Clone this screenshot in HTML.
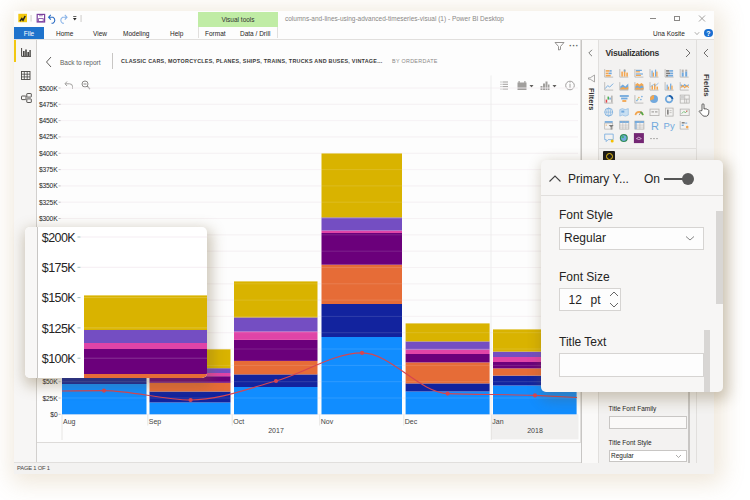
<!DOCTYPE html>
<html><head><meta charset="utf-8">
<style>
*{margin:0;padding:0;box-sizing:border-box}
html,body{width:750px;height:500px;overflow:hidden;background:#fff;font-family:"Liberation Sans",sans-serif;color:#252423}
.a{position:absolute}
#win{left:14px;top:11px;width:700px;height:463px;background:#f9f9f9;box-shadow:3px 4px 22px 5px rgba(175,135,70,0.2)}
.t{position:absolute;white-space:nowrap;line-height:1}
</style></head><body>
<div id="win" class="a"></div>
<div class="a" style="left:14px;top:11px;width:700px;height:28px;background:#fdfdfd"></div>

<!-- title bar -->
<div class="a" style="left:198px;top:12px;width:80px;height:15px;background:#c0eca5"></div>
<div class="t" style="left:198px;top:17px;width:80px;text-align:center;font-size:6.5px;color:#333">Visual tools</div>
<div class="t" style="left:285px;top:16px;font-size:6.5px;color:#8a8886">columns-and-lines-using-advanced-timeseries-visual (1) - Power BI Desktop</div>

<!-- ribbon row -->
<div class="a" style="left:14px;top:27px;width:30px;height:12px;background:#1f73cc"></div>
<div class="t" style="left:14px;top:30.8px;width:30px;text-align:center;font-size:6.5px;color:#fff">File</div>
<div class="t" style="left:56px;top:30.8px;font-size:6.5px">Home</div>
<div class="t" style="left:93px;top:30.8px;font-size:6.5px">View</div>
<div class="t" style="left:123px;top:30.8px;font-size:6.5px">Modeling</div>
<div class="t" style="left:170px;top:30.8px;font-size:6.5px">Help</div>
<div class="t" style="left:205px;top:30.8px;font-size:6.5px">Format</div>
<div class="t" style="left:240px;top:30.8px;font-size:6.5px">Data / Drill</div>
<div class="t" style="left:653px;top:30.8px;font-size:6.5px;color:#252423">Una Kosite</div>
<div class="a" style="left:14px;top:39px;width:700px;height:1px;background:#e1dfdd"></div>

<!-- left nav -->
<div class="a" style="left:14px;top:40px;width:23px;height:423px;background:#f7f6f5;border-right:1px solid #d2d0ce"></div>
<div class="a" style="left:14px;top:40px;width:2px;height:22px;background:#f2c811"></div>

<!-- status bar -->
<div class="a" style="left:14px;top:462px;width:700px;height:12px;background:#f3f2f1;border-top:1px solid #e1dfdd"></div>
<div class="t" style="left:17px;top:465.5px;font-size:5.8px;color:#484644;letter-spacing:-0.2px">PAGE 1 OF 1</div>

<!-- visual box -->
<div class="a" style="left:37px;top:40px;width:544px;height:403px;border-right:1px solid #e1dfdd;border-bottom:1px solid #dddbd9;background:#fdfdfd"></div>


<!-- visual header -->
<svg class="a" style="left:45px;top:56px" width="8" height="12" viewBox="0 0 8 12"><path d="M6 1 L1.5 6 L6 11" fill="none" stroke="#605e5c" stroke-width="1"/></svg>
<div class="t" style="left:60px;top:60px;font-size:6.5px;color:#605e5c">Back to report</div>
<div class="a" style="left:112px;top:53px;width:1px;height:16px;background:#c8c6c4"></div>
<div class="t" style="left:121px;top:59px;font-size:5.4px;font-weight:bold;color:#3b3a39;letter-spacing:0.25px">CLASSIC CARS, MOTORCYCLES, PLANES, SHIPS, TRAINS, TRUCKS AND BUSES, VINTAGE...</div>
<div class="t" style="left:392px;top:59px;font-size:5.4px;color:#8a8886;letter-spacing:0.3px">BY ORDERDATE</div>
<!-- undo & zoom -->
<svg class="a" style="left:64px;top:80px" width="10" height="10" viewBox="0 0 10 10"><path d="M3 1.5 L1 3.8 L3 6 M1.2 3.8 H5.5 Q8.5 3.8 8.5 6.5 V9" fill="none" stroke="#a19f9d" stroke-width="1"/></svg>
<svg class="a" style="left:81px;top:80px" width="10" height="10" viewBox="0 0 10 10"><circle cx="4" cy="4" r="3" fill="none" stroke="#8a8886" stroke-width="1"/><path d="M2.5 4 H5.5 M6.2 6.2 L9 9" stroke="#8a8886" stroke-width="1.1"/></svg>
<!-- top right visual icons -->
<svg class="a" style="left:554px;top:41px" width="11" height="10" viewBox="0 0 11 10"><path d="M1 1.5 H10 L6.5 5.5 V8.5 L4.5 9 V5.5 Z" fill="none" stroke="#8a8886" stroke-width="0.9"/></svg>
<div class="t" style="left:569px;top:41.5px;font-size:9px;font-weight:bold;color:#605e5c;letter-spacing:0.3px">&middot;&middot;&middot;</div>
<svg class="a" style="left:500px;top:80px" width="80" height="11" viewBox="0 0 80 11">
 <g stroke="#8a8886" stroke-width="0.8"><line x1="2.5" y1="2" x2="8" y2="2"/><line x1="2.5" y1="4.3" x2="8" y2="4.3"/><line x1="2.5" y1="6.6" x2="8" y2="6.6"/><line x1="2.5" y1="9" x2="8" y2="9"/><line x1="0.5" y1="2" x2="1.5" y2="2"/><line x1="0.5" y1="4.3" x2="1.5" y2="4.3"/><line x1="0.5" y1="6.6" x2="1.5" y2="6.6"/><line x1="0.5" y1="9" x2="1.5" y2="9"/></g>
 <rect x="17.5" y="2.5" width="9" height="7.5" fill="#a19f9d"/><rect x="18.5" y="1" width="1.2" height="2" fill="#a19f9d"/><rect x="24.3" y="1" width="1.2" height="2" fill="#a19f9d"/>
 <path d="M29.5 5 L33.5 5 L31.5 7.5Z" fill="#605e5c"/>
 <rect x="40.5" y="6" width="2" height="4" fill="#a19f9d"/><rect x="43" y="3.5" width="2" height="6.5" fill="#a19f9d"/><rect x="45.5" y="1.5" width="2" height="8.5" fill="#a19f9d"/><rect x="48" y="4.5" width="1.5" height="5.5" fill="#a19f9d"/>
 <path d="M52.5 5 L56.5 5 L54.5 7.5Z" fill="#605e5c"/>
 <circle cx="70" cy="5.5" r="4.3" fill="none" stroke="#8a8886" stroke-width="0.8"/><line x1="70" y1="4" x2="70" y2="8" stroke="#8a8886" stroke-width="0.8"/><circle cx="70" cy="2.8" r="0.5" fill="#8a8886"/>
</svg>
<!-- left nav icons -->
<svg class="a" style="left:20.5px;top:47.5px" width="10" height="9" viewBox="0 0 10 9"><path d="M0.6 0 V8.4 H10" fill="none" stroke="#484644" stroke-width="1"/><rect x="2" y="3" width="1.6" height="5" fill="#484644"/><rect x="4.2" y="1.5" width="1.6" height="6.5" fill="#484644"/><rect x="6.4" y="4" width="1.6" height="4" fill="#484644"/><rect x="8.4" y="2" width="1.4" height="6" fill="#484644"/></svg>
<svg class="a" style="left:21px;top:70.5px" width="9.5" height="9" viewBox="0 0 9.5 9"><rect x="0.5" y="0.5" width="8.5" height="8" fill="none" stroke="#484644" stroke-width="0.9"/><path d="M0.5 3.2 H9 M0.5 5.9 H9 M3.3 0.5 V8.5 M6.2 0.5 V8.5" stroke="#484644" stroke-width="0.8"/></svg>
<svg class="a" style="left:20.5px;top:92.5px" width="11" height="10" viewBox="0 0 11 10"><rect x="0.5" y="3" width="4.5" height="3.6" rx="0.5" fill="none" stroke="#484644" stroke-width="0.9"/><rect x="5.8" y="0.5" width="4.5" height="3.6" rx="0.5" fill="none" stroke="#484644" stroke-width="0.9"/><rect x="5.8" y="5.9" width="4.5" height="3.6" rx="0.5" fill="none" stroke="#484644" stroke-width="0.9"/></svg>
<svg class="a" style="left:0;top:0" width="750" height="500" viewBox="0 0 750 500"><g font-family="Liberation Sans" font-size="7" fill="#444"><rect x="491" y="414.3" width="87.5" height="25" fill="#f0efee"/><line x1="62" y1="414.3" x2="62" y2="440" stroke="#e1dfdd" stroke-width="0.8"/><text x="63" y="423.5">Aug</text><line x1="147.8" y1="414.3" x2="147.8" y2="425.5" stroke="#e1dfdd" stroke-width="0.8"/><text x="148.8" y="423.5">Sep</text><line x1="232.2" y1="414.3" x2="232.2" y2="425.5" stroke="#e1dfdd" stroke-width="0.8"/><text x="233.2" y="423.5">Oct</text><line x1="319.7" y1="414.3" x2="319.7" y2="425.5" stroke="#e1dfdd" stroke-width="0.8"/><text x="320.7" y="423.5">Nov</text><line x1="403.8" y1="414.3" x2="403.8" y2="425.5" stroke="#e1dfdd" stroke-width="0.8"/><text x="404.8" y="423.5">Dec</text><line x1="491.3" y1="414.3" x2="491.3" y2="440" stroke="#e1dfdd" stroke-width="0.8"/><text x="492.3" y="423.5">Jan</text><text x="276" y="432.5" text-anchor="middle">2017</text><text x="535" y="432.5" text-anchor="middle">2018</text></g></svg><svg class="a" style="left:0;top:0" width="750" height="500" viewBox="0 0 750 500"><g><line x1="60" y1="88.0" x2="578" y2="88.0" stroke="#f2ecf0" stroke-width="0.8"/><line x1="60" y1="104.3" x2="578" y2="104.3" stroke="#f2ecf0" stroke-width="0.8"/><line x1="60" y1="120.6" x2="578" y2="120.6" stroke="#f2ecf0" stroke-width="0.8"/><line x1="60" y1="136.9" x2="578" y2="136.9" stroke="#f2ecf0" stroke-width="0.8"/><line x1="60" y1="153.3" x2="578" y2="153.3" stroke="#f2ecf0" stroke-width="0.8"/><line x1="60" y1="169.6" x2="578" y2="169.6" stroke="#f2ecf0" stroke-width="0.8"/><line x1="60" y1="185.9" x2="578" y2="185.9" stroke="#f2ecf0" stroke-width="0.8"/><line x1="60" y1="202.2" x2="578" y2="202.2" stroke="#f2ecf0" stroke-width="0.8"/><line x1="60" y1="218.5" x2="578" y2="218.5" stroke="#f2ecf0" stroke-width="0.8"/><line x1="60" y1="234.8" x2="578" y2="234.8" stroke="#f2ecf0" stroke-width="0.8"/><line x1="60" y1="251.2" x2="578" y2="251.2" stroke="#f2ecf0" stroke-width="0.8"/><line x1="60" y1="267.5" x2="578" y2="267.5" stroke="#f2ecf0" stroke-width="0.8"/><line x1="60" y1="283.8" x2="578" y2="283.8" stroke="#f2ecf0" stroke-width="0.8"/><line x1="60" y1="300.1" x2="578" y2="300.1" stroke="#f2ecf0" stroke-width="0.8"/><line x1="60" y1="316.4" x2="578" y2="316.4" stroke="#f2ecf0" stroke-width="0.8"/><line x1="60" y1="332.7" x2="578" y2="332.7" stroke="#f2ecf0" stroke-width="0.8"/><line x1="60" y1="349.0" x2="578" y2="349.0" stroke="#f2ecf0" stroke-width="0.8"/><line x1="60" y1="365.4" x2="578" y2="365.4" stroke="#f2ecf0" stroke-width="0.8"/><line x1="60" y1="381.7" x2="578" y2="381.7" stroke="#f2ecf0" stroke-width="0.8"/><line x1="60" y1="398.0" x2="578" y2="398.0" stroke="#f2ecf0" stroke-width="0.8"/><line x1="60" y1="414.3" x2="578" y2="414.3" stroke="#f2ecf0" stroke-width="0.8"/></g><line x1="491" y1="75.5" x2="491" y2="414" stroke="#e8e8e8" stroke-width="0.8"/><rect x="62" y="384" width="84.5" height="30.3" fill="#118DFF"/><rect x="62" y="372" width="84.5" height="12.0" fill="#12239E"/><rect x="62" y="358" width="84.5" height="14.0" fill="#E66C37"/><rect x="62" y="343.6" width="84.5" height="14.4" fill="#6B007B"/><rect x="62" y="340.7" width="84.5" height="2.9" fill="#E044A7"/><rect x="62" y="333.8" width="84.5" height="6.9" fill="#744EC2"/><rect x="62" y="315.1" width="84.5" height="18.7" fill="#D9B300"/><rect x="149.5" y="402.5" width="81.0" height="11.8" fill="#118DFF"/><rect x="149.5" y="391.5" width="81.0" height="11.0" fill="#12239E"/><rect x="149.5" y="382.8" width="81.0" height="8.7" fill="#E66C37"/><rect x="149.5" y="376.2" width="81.0" height="6.6" fill="#6B007B"/><rect x="149.5" y="373" width="81.0" height="3.2" fill="#E044A7"/><rect x="149.5" y="368.2" width="81.0" height="4.8" fill="#744EC2"/><rect x="149.5" y="349.3" width="81.0" height="18.9" fill="#D9B300"/><rect x="234" y="387" width="83.5" height="27.3" fill="#118DFF"/><rect x="234" y="374.4" width="83.5" height="12.6" fill="#12239E"/><rect x="234" y="360.9" width="83.5" height="13.5" fill="#E66C37"/><rect x="234" y="339.9" width="83.5" height="21.0" fill="#6B007B"/><rect x="234" y="331.5" width="83.5" height="8.4" fill="#E044A7"/><rect x="234" y="317.4" width="83.5" height="14.1" fill="#744EC2"/><rect x="234" y="281.4" width="83.5" height="36.0" fill="#D9B300"/><rect x="321.5" y="337" width="80.5" height="77.3" fill="#118DFF"/><rect x="321.5" y="304" width="80.5" height="33.0" fill="#12239E"/><rect x="321.5" y="264.7" width="80.5" height="39.3" fill="#E66C37"/><rect x="321.5" y="233" width="80.5" height="31.7" fill="#6B007B"/><rect x="321.5" y="230.5" width="80.5" height="2.5" fill="#E044A7"/><rect x="321.5" y="217.4" width="80.5" height="13.1" fill="#744EC2"/><rect x="321.5" y="153.4" width="80.5" height="64.0" fill="#D9B300"/><rect x="405.6" y="391.5" width="84.0" height="22.8" fill="#118DFF"/><rect x="405.6" y="383.4" width="84.0" height="8.1" fill="#12239E"/><rect x="405.6" y="362.4" width="84.0" height="21.0" fill="#E66C37"/><rect x="405.6" y="354" width="84.0" height="8.4" fill="#6B007B"/><rect x="405.6" y="349.5" width="84.0" height="4.5" fill="#E044A7"/><rect x="405.6" y="341.4" width="84.0" height="8.1" fill="#744EC2"/><rect x="405.6" y="323.4" width="84.0" height="18.0" fill="#D9B300"/><rect x="493" y="385.5" width="83.6" height="28.8" fill="#118DFF"/><rect x="493" y="375.6" width="83.6" height="9.9" fill="#12239E"/><rect x="493" y="368.4" width="83.6" height="7.2" fill="#E66C37"/><rect x="493" y="362" width="83.6" height="6.4" fill="#6B007B"/><rect x="493" y="357" width="83.6" height="5.0" fill="#E044A7"/><rect x="493" y="351.6" width="83.6" height="5.4" fill="#744EC2"/><rect x="493" y="329.4" width="83.6" height="22.2" fill="#D9B300"/><line x1="62" y1="88.0" x2="577" y2="88.0" stroke="#ffffff" stroke-opacity="0.18" stroke-width="0.7"/><line x1="62" y1="104.3" x2="577" y2="104.3" stroke="#ffffff" stroke-opacity="0.18" stroke-width="0.7"/><line x1="62" y1="120.6" x2="577" y2="120.6" stroke="#ffffff" stroke-opacity="0.18" stroke-width="0.7"/><line x1="62" y1="136.9" x2="577" y2="136.9" stroke="#ffffff" stroke-opacity="0.18" stroke-width="0.7"/><line x1="62" y1="153.3" x2="577" y2="153.3" stroke="#ffffff" stroke-opacity="0.18" stroke-width="0.7"/><line x1="62" y1="169.6" x2="577" y2="169.6" stroke="#ffffff" stroke-opacity="0.18" stroke-width="0.7"/><line x1="62" y1="185.9" x2="577" y2="185.9" stroke="#ffffff" stroke-opacity="0.18" stroke-width="0.7"/><line x1="62" y1="202.2" x2="577" y2="202.2" stroke="#ffffff" stroke-opacity="0.18" stroke-width="0.7"/><line x1="62" y1="218.5" x2="577" y2="218.5" stroke="#ffffff" stroke-opacity="0.18" stroke-width="0.7"/><line x1="62" y1="234.8" x2="577" y2="234.8" stroke="#ffffff" stroke-opacity="0.18" stroke-width="0.7"/><line x1="62" y1="251.2" x2="577" y2="251.2" stroke="#ffffff" stroke-opacity="0.18" stroke-width="0.7"/><line x1="62" y1="267.5" x2="577" y2="267.5" stroke="#ffffff" stroke-opacity="0.18" stroke-width="0.7"/><line x1="62" y1="283.8" x2="577" y2="283.8" stroke="#ffffff" stroke-opacity="0.18" stroke-width="0.7"/><line x1="62" y1="300.1" x2="577" y2="300.1" stroke="#ffffff" stroke-opacity="0.18" stroke-width="0.7"/><line x1="62" y1="316.4" x2="577" y2="316.4" stroke="#ffffff" stroke-opacity="0.18" stroke-width="0.7"/><line x1="62" y1="332.7" x2="577" y2="332.7" stroke="#ffffff" stroke-opacity="0.18" stroke-width="0.7"/><line x1="62" y1="349.0" x2="577" y2="349.0" stroke="#ffffff" stroke-opacity="0.18" stroke-width="0.7"/><line x1="62" y1="365.4" x2="577" y2="365.4" stroke="#ffffff" stroke-opacity="0.18" stroke-width="0.7"/><line x1="62" y1="381.7" x2="577" y2="381.7" stroke="#ffffff" stroke-opacity="0.18" stroke-width="0.7"/><line x1="62" y1="398.0" x2="577" y2="398.0" stroke="#ffffff" stroke-opacity="0.18" stroke-width="0.7"/><path d="M62,391 C76.0,390.8 90.0,390.6 104,390.6 C132.9,390.6 161.7,400.0 190.6,400 C219.1,400.0 247.5,388.8 276,381 C304.7,373.1 333.3,352.9 362,352.9 C390.5,352.9 419.1,392.4 447.6,393.6 C476.7,394.8 505.9,394.2 535,395.4 C549.0,396.0 563.0,396.7 577,397.5" fill="none" stroke="#D64550" stroke-width="1.1"/><circle cx="104" cy="390.6" r="2.1" fill="#D64550"/><circle cx="190.6" cy="400" r="2.1" fill="#D64550"/><circle cx="276" cy="381" r="2.1" fill="#D64550"/><circle cx="362" cy="352.9" r="2.1" fill="#D64550"/><circle cx="447.6" cy="393.6" r="2.1" fill="#D64550"/><circle cx="535" cy="395.4" r="2.1" fill="#D64550"/><g font-family="Liberation Sans" font-size="6.7" fill="#252423" letter-spacing="-0.15"><text x="57.5" y="90.5" text-anchor="end">$500K</text><line x1="58.5" y1="88.0" x2="60.5" y2="88.0" stroke="#999" stroke-width="0.6"/><text x="57.5" y="106.8" text-anchor="end">$475K</text><line x1="58.5" y1="104.3" x2="60.5" y2="104.3" stroke="#999" stroke-width="0.6"/><text x="57.5" y="123.1" text-anchor="end">$450K</text><line x1="58.5" y1="120.6" x2="60.5" y2="120.6" stroke="#999" stroke-width="0.6"/><text x="57.5" y="139.4" text-anchor="end">$425K</text><line x1="58.5" y1="136.9" x2="60.5" y2="136.9" stroke="#999" stroke-width="0.6"/><text x="57.5" y="155.8" text-anchor="end">$400K</text><line x1="58.5" y1="153.3" x2="60.5" y2="153.3" stroke="#999" stroke-width="0.6"/><text x="57.5" y="172.1" text-anchor="end">$375K</text><line x1="58.5" y1="169.6" x2="60.5" y2="169.6" stroke="#999" stroke-width="0.6"/><text x="57.5" y="188.4" text-anchor="end">$350K</text><line x1="58.5" y1="185.9" x2="60.5" y2="185.9" stroke="#999" stroke-width="0.6"/><text x="57.5" y="204.7" text-anchor="end">$325K</text><line x1="58.5" y1="202.2" x2="60.5" y2="202.2" stroke="#999" stroke-width="0.6"/><text x="57.5" y="221.0" text-anchor="end">$300K</text><line x1="58.5" y1="218.5" x2="60.5" y2="218.5" stroke="#999" stroke-width="0.6"/><text x="57.5" y="237.3" text-anchor="end">$275K</text><line x1="58.5" y1="234.8" x2="60.5" y2="234.8" stroke="#999" stroke-width="0.6"/><text x="57.5" y="253.7" text-anchor="end">$250K</text><line x1="58.5" y1="251.2" x2="60.5" y2="251.2" stroke="#999" stroke-width="0.6"/><text x="57.5" y="270.0" text-anchor="end">$225K</text><line x1="58.5" y1="267.5" x2="60.5" y2="267.5" stroke="#999" stroke-width="0.6"/><text x="57.5" y="286.3" text-anchor="end">$200K</text><line x1="58.5" y1="283.8" x2="60.5" y2="283.8" stroke="#999" stroke-width="0.6"/><text x="57.5" y="302.6" text-anchor="end">$175K</text><line x1="58.5" y1="300.1" x2="60.5" y2="300.1" stroke="#999" stroke-width="0.6"/><text x="57.5" y="318.9" text-anchor="end">$150K</text><line x1="58.5" y1="316.4" x2="60.5" y2="316.4" stroke="#999" stroke-width="0.6"/><text x="57.5" y="335.2" text-anchor="end">$125K</text><line x1="58.5" y1="332.7" x2="60.5" y2="332.7" stroke="#999" stroke-width="0.6"/><text x="57.5" y="351.5" text-anchor="end">$100K</text><line x1="58.5" y1="349.0" x2="60.5" y2="349.0" stroke="#999" stroke-width="0.6"/><text x="57.5" y="367.9" text-anchor="end">$75K</text><line x1="58.5" y1="365.4" x2="60.5" y2="365.4" stroke="#999" stroke-width="0.6"/><text x="57.5" y="384.2" text-anchor="end">$50K</text><line x1="58.5" y1="381.7" x2="60.5" y2="381.7" stroke="#999" stroke-width="0.6"/><text x="57.5" y="400.5" text-anchor="end">$25K</text><line x1="58.5" y1="398.0" x2="60.5" y2="398.0" stroke="#999" stroke-width="0.6"/><text x="57.5" y="416.8" text-anchor="end">$0</text><line x1="58.5" y1="414.3" x2="60.5" y2="414.3" stroke="#999" stroke-width="0.6"/></g></svg>
<!-- panes -->
<div class="a" style="left:581px;top:40px;width:17px;height:423px;background:#faf9f8;border-left:1px solid #c8c6c4"></div>
<div class="a" style="left:598px;top:40px;width:99px;height:423px;background:#f3f2f1;border-left:1px solid #e1dfdd"></div>
<div class="a" style="left:696px;top:40px;width:18px;height:423px;background:#f3f2f1;border-left:1px solid #e1dfdd"></div>

<!-- filters pane -->
<svg class="a" style="left:587px;top:49px" width="7" height="8" viewBox="0 0 7 8"><path d="M5 0.8 L1.8 4 L5 7.2" fill="none" stroke="#605e5c" stroke-width="0.8"/></svg>
<svg class="a" style="left:587px;top:74px" width="9" height="9" viewBox="0 0 9 9"><path d="M7.5 1 V8 L3.2 5.2 H1.5 V3.8 H3.2 Z" fill="none" stroke="#8a8886" stroke-width="0.7" stroke-linejoin="round"/></svg>
<div class="t" style="left:585px;top:88px;font-size:7.5px;font-weight:bold;color:#323130;transform-origin:0 0;transform:translate(9.5px,0) rotate(90deg)">Filters</div>
<!-- viz pane -->
<div class="t" style="left:605.5px;top:49px;font-size:8.6px;font-weight:bold;color:#323130;letter-spacing:-0.25px">Visualizations</div>
<svg class="a" style="left:684px;top:48px" width="8" height="10" viewBox="0 0 8 10"><path d="M2 1 L6 5 L2 9" fill="none" stroke="#605e5c" stroke-width="0.9"/></svg>
<div class="a" style="left:599px;top:148px;width:98px;height:1px;background:#e1dfdd"></div>
<div class="a" style="left:603px;top:151px;width:12px;height:12px;background:#1b1a19;border-radius:1px"></div>
<div class="a" style="left:605.5px;top:153px;width:7px;height:7px;border-radius:50%;border:1.3px solid #f2c811"></div>
<!-- fields pane -->
<svg class="a" style="left:702px;top:48px" width="8" height="10" viewBox="0 0 8 10"><path d="M6 1 L2 5 L6 9" fill="none" stroke="#605e5c" stroke-width="0.9"/></svg>
<div class="t" style="left:699.5px;top:73.5px;font-size:7.8px;font-weight:bold;color:#3b3a39;transform-origin:0 0;transform:translate(10px,0) rotate(90deg)">Fields</div>
<svg class="a" style="left:698px;top:102.5px" width="12" height="14" viewBox="0 0 12 14"><path d="M4 7.5 V1.8 Q4 0.8 5 0.8 Q6 0.8 6 1.8 V6 Q7 5.5 8 6 Q9 5.8 9.5 6.5 Q10.5 6.5 10.8 7.5 V10 Q10.5 12.8 8.5 13.2 H6 Q4.5 12.8 3.5 11.2 L1.2 8.5 Q1.3 7.2 2.8 7.9Z" fill="#fff" stroke="#3b3a39" stroke-width="0.8"/></svg>
<!-- lower viz pane controls -->
<div class="a" style="left:688px;top:380px;width:2px;height:83px;background:#c8c6c4"></div>
<div class="t" style="left:608.5px;top:405.5px;font-size:6.5px;color:#252423">Title Font Family</div>
<div class="a" style="left:608.5px;top:415.5px;width:78px;height:13px;background:#faf9f8;border:1px solid #c8c6c4"></div>
<div class="t" style="left:608.5px;top:439.5px;font-size:6.5px;color:#252423">Title Font Style</div>
<div class="a" style="left:608.5px;top:450px;width:78px;height:12px;background:#fff;border:1px solid #c8c6c4"></div>
<div class="t" style="left:611px;top:453px;font-size:6.5px;color:#252423">Regular</div>
<svg class="a" style="left:675px;top:454px" width="7" height="5" viewBox="0 0 7 5"><path d="M1 1 L3.5 3.5 L6 1" fill="none" stroke="#8a8886" stroke-width="0.7"/></svg>
<!-- title bar extras -->
<svg class="a" style="left:18px;top:13px" width="80" height="11" viewBox="0 0 80 11">
 <rect x="0.3" y="0.8" width="8.7" height="8.4" fill="#f2c811"/><path d="M2 8.2 L3.8 5.5 L5 7.2 L7.2 3" fill="none" stroke="#252423" stroke-width="1.5"/>
 <rect x="12.6" y="2" width="0.9" height="6.5" fill="#c8c6c4"/>
 <rect x="19.2" y="1.4" width="7.4" height="7.6" fill="none" stroke="#7b3f9e" stroke-width="1.2"/><rect x="20.6" y="5.6" width="4.6" height="3" fill="none" stroke="#7b3f9e" stroke-width="0.8"/><rect x="21" y="1.5" width="3.8" height="1.8" fill="#7b3f9e" opacity="0.5"/>
 <path d="M32.8 1.8 L30.6 4.2 L32.8 6.6 M30.9 4.2 H35 A3.4 3.4 0 0 1 35 10.2 H33.5" fill="none" stroke="#2b6cc4" stroke-width="1.1"/>
 <path d="M46.8 1.8 L49 4.2 L46.8 6.6 M48.7 4.2 H44.6 A3.4 3.4 0 0 0 44.6 10.2 H46" fill="none" stroke="#8ab4e8" stroke-width="1.1"/>
 <path d="M55 5 H58.6 L56.8 7.4Z" fill="#252423"/><rect x="55.2" y="3.3" width="3.2" height="0.7" fill="#252423"/>
 <rect x="62.6" y="2" width="0.9" height="7" fill="#c8c6c4"/>
</svg>
<div class="a" style="left:650px;top:18px;width:5.5px;height:0.8px;background:#8a8886"></div>
<div class="a" style="left:674px;top:15.5px;width:6px;height:5.5px;border:0.8px solid #8a8886"></div>
<svg class="a" style="left:698px;top:15px" width="8" height="7" viewBox="0 0 8 7"><path d="M1 0.5 L7 6.5 M7 0.5 L1 6.5" stroke="#8a8886" stroke-width="0.8"/></svg>
<svg class="a" style="left:694px;top:30.5px" width="6" height="5" viewBox="0 0 6 5"><path d="M0.8 1.2 L3 3.6 L5.2 1.2" fill="none" stroke="#8a8886" stroke-width="0.7"/></svg>
<div class="a" style="left:704.2px;top:28.8px;width:8.6px;height:8.6px;border-radius:50%;background:#1a6fd1"></div>
<div class="t" style="left:704.2px;top:29.8px;width:8.6px;text-align:center;font-size:7px;font-weight:bold;color:#fff">?</div>
<div class="a" style="left:198px;top:27px;width:1px;height:11px;background:#e1dfdd"></div>
<div class="a" style="left:277px;top:27px;width:1px;height:11px;background:#e1dfdd"></div>
<svg class="a" style="left:0;top:0" width="750" height="500" viewBox="0 0 750 500"><g transform="translate(604.2,68.6)"><path d="M0.5 0.5 V8.5 H9" fill="none" stroke="#b3b1af" stroke-width="0.8"/><rect x="1.5" y="1.5" width="4" height="1.6" fill="#f2a650"/><rect x="5.5" y="1.5" width="2" height="1.6" fill="#72a9dd"/><rect x="1.5" y="4" width="3" height="1.6" fill="#f2a650"/><rect x="4.5" y="4" width="3" height="1.6" fill="#72a9dd"/><rect x="1.5" y="6.3" width="5" height="1.6" fill="#f2a650"/></g><g transform="translate(619.3,68.6)"><path d="M0.5 0.5 V8.5 H9" fill="none" stroke="#b3b1af" stroke-width="0.8"/><rect x="2" y="3" width="1.6" height="5" fill="#f2a650"/><rect x="4.5" y="1" width="1.6" height="7" fill="#f2a650"/><rect x="4.5" y="1" width="1.6" height="2" fill="#72a9dd"/><rect x="7" y="4" width="1.6" height="4" fill="#f2a650"/></g><g transform="translate(634.4,68.6)"><path d="M0.5 0.5 V8.5 H9" fill="none" stroke="#b3b1af" stroke-width="0.8"/><rect x="1.5" y="1.2" width="6" height="1.2" fill="#72a9dd"/><rect x="1.5" y="2.6" width="4" height="1.2" fill="#f2a650"/><rect x="1.5" y="4.8" width="7" height="1.2" fill="#72a9dd"/><rect x="1.5" y="6.2" width="5" height="1.2" fill="#f2a650"/></g><g transform="translate(649.5,68.6)"><path d="M0.5 0.5 V8.5 H9" fill="none" stroke="#b3b1af" stroke-width="0.8"/><rect x="2" y="2" width="1.2" height="6" fill="#72a9dd"/><rect x="3.3" y="4" width="1.2" height="4" fill="#f2a650"/><rect x="5.5" y="1" width="1.2" height="7" fill="#72a9dd"/><rect x="6.8" y="3" width="1.2" height="5" fill="#f2a650"/></g><g transform="translate(664.6,68.6)"><path d="M0.5 0.5 V8.5 H9" fill="none" stroke="#b3b1af" stroke-width="0.8"/><rect x="1.5" y="1.5" width="3" height="1.6" fill="#7a7876"/><rect x="4.5" y="1.5" width="4" height="1.6" fill="#72a9dd"/><rect x="1.5" y="4" width="4" height="1.6" fill="#7a7876"/><rect x="5.5" y="4" width="3" height="1.6" fill="#72a9dd"/><rect x="1.5" y="6.3" width="2" height="1.6" fill="#7a7876"/><rect x="3.5" y="6.3" width="5" height="1.6" fill="#72a9dd"/></g><g transform="translate(679.7,68.6)"><path d="M0.5 0.5 V8.5 H9" fill="none" stroke="#b3b1af" stroke-width="0.8"/><rect x="2" y="1" width="2" height="3" fill="#b3b1af"/><rect x="2" y="4" width="2" height="4" fill="#72a9dd"/><rect x="5.5" y="1" width="2" height="2" fill="#b3b1af"/><rect x="5.5" y="3" width="2" height="5" fill="#72a9dd"/></g><g transform="translate(604.2,81.6)"><path d="M0.5 0.5 V8.5 H9" fill="none" stroke="#b3b1af" stroke-width="0.8"/><path d="M1 7 L3.5 4 L5.5 5.5 L9 2" fill="none" stroke="#72a9dd" stroke-width="0.9"/></g><g transform="translate(619.3,81.6)"><path d="M0.5 0.5 V8.5 H9" fill="none" stroke="#b3b1af" stroke-width="0.8"/><path d="M1 8 V5 L3.5 3 L6 5 L9 2 V8Z" fill="#72a9dd"/><path d="M1 8 V6.5 L4 5.5 L6.5 6.5 L9 5 V8Z" fill="#f2a650"/></g><g transform="translate(634.4,81.6)"><path d="M0.5 0.5 V8.5 H9" fill="none" stroke="#b3b1af" stroke-width="0.8"/><path d="M1 8 V3 L3 1.5 L5 3 L7 1.5 L9 3 V8Z" fill="#f2a650"/><path d="M1 8 V5 L3 4 L5 5.5 L7 4 L9 5 V8Z" fill="#72a9dd"/><path d="M1 8 V6.5 L4 6 L6 7 L9 6 V8Z" fill="#f2a650"/></g><g transform="translate(649.5,81.6)"><path d="M0.5 0.5 V8.5 H9" fill="none" stroke="#b3b1af" stroke-width="0.8"/><rect x="2" y="4" width="1.5" height="4" fill="#f2a650"/><rect x="4.5" y="2" width="1.5" height="6" fill="#f2a650"/><rect x="7" y="5" width="1.5" height="3" fill="#f2a650"/><path d="M1 5 L4 3 L6 4 L9 1.5" fill="none" stroke="#72a9dd" stroke-width="0.7"/></g><g transform="translate(664.6,81.6)"><path d="M0.5 0.5 V8.5 H9" fill="none" stroke="#b3b1af" stroke-width="0.8"/><rect x="2" y="3" width="1.2" height="5" fill="#72a9dd"/><rect x="3.3" y="5" width="1.2" height="3" fill="#f2a650"/><rect x="5.5" y="2" width="1.2" height="6" fill="#72a9dd"/><rect x="6.8" y="4" width="1.2" height="4" fill="#f2a650"/></g><g transform="translate(679.7,81.6)"><path d="M0.5 0.5 V8.5 H9" fill="none" stroke="#b3b1af" stroke-width="0.8"/><path d="M1 3 L3 5 L5 3 L7 5 L9 3" fill="none" stroke="#72a9dd" stroke-width="1.2"/><path d="M1 6 L3 4 L5 6 L7 4 L9 6" fill="none" stroke="#f2a650" stroke-width="1.2"/></g><g transform="translate(604.2,94.6)"><path d="M0.5 0.5 V8.5 H9" fill="none" stroke="#b3b1af" stroke-width="0.8"/><rect x="1.5" y="5" width="1.5" height="3" fill="#e2474b"/><rect x="3.3" y="2" width="1.5" height="3" fill="#4cae4f"/><rect x="5.1" y="3" width="1.5" height="2" fill="#72a9dd"/><rect x="6.9" y="1" width="1.5" height="7" fill="#b3b1af"/></g><g transform="translate(619.3,94.6)"><rect x="0.5" y="0.5" width="9" height="1.8" fill="#72a9dd"/><rect x="1.8" y="3" width="6.4" height="1.8" fill="#72a9dd"/><rect x="3" y="5.5" width="4" height="1.8" fill="#f2a650"/></g><g transform="translate(634.4,94.6)"><path d="M0.5 0.5 V8.5 H9" fill="none" stroke="#b3b1af" stroke-width="0.8"/><circle cx="2.5" cy="6" r="0.8" fill="#72a9dd"/><circle cx="4.5" cy="3" r="0.8" fill="#f2a650"/><circle cx="6.5" cy="5" r="0.8" fill="#72a9dd"/><circle cx="7.5" cy="2" r="0.8" fill="#72a9dd"/><circle cx="3.5" cy="4.5" r="0.7" fill="#4cae4f"/></g><g transform="translate(649.5,94.6)"><circle cx="4.5" cy="4.5" r="4" fill="#72a9dd"/><path d="M4.5 4.5 V0.5 A4 4 0 0 0 0.8 6Z" fill="#f2a650"/></g><g transform="translate(664.6,94.6)"><circle cx="4.5" cy="4.5" r="3.3" fill="none" stroke="#72a9dd" stroke-width="1.8"/><path d="M4.5 1.2 A3.3 3.3 0 0 1 7.8 4.5" fill="none" stroke="#1f5fa8" stroke-width="1.8"/></g><g transform="translate(679.7,94.6)"><rect x="0.5" y="0.5" width="9" height="8" fill="none" stroke="#b3b1af" stroke-width="0.8"/><path d="M5 0.5 V8.5 M0.5 4.5 H9.5 M7 4.5 V8.5" stroke="#b3b1af" stroke-width="0.8"/><rect x="1" y="1" width="3.6" height="3" fill="#d0d0d0"/></g><g transform="translate(604.2,107.6)"><circle cx="4.5" cy="4.5" r="4" fill="none" stroke="#72a9dd" stroke-width="0.8"/><path d="M0.5 4.5 H8.5 M4.5 0.5 V8.5" stroke="#72a9dd" stroke-width="0.6"/><ellipse cx="4.5" cy="4.5" rx="2" ry="4" fill="none" stroke="#72a9dd" stroke-width="0.6"/></g><g transform="translate(619.3,107.6)"><path d="M0.5 2 L3 1 L6 2 L9 1 V7.5 L6 8.5 L3 7.5 L0.5 8.5Z" fill="#c9dff2" stroke="#72a9dd" stroke-width="0.5"/><rect x="2" y="3" width="3" height="2" fill="#72a9dd"/></g><g transform="translate(634.4,107.6)"><path d="M1 7.5 A3.8 3.8 0 0 1 8.5 7.5" fill="none" stroke="#f2a650" stroke-width="1.6"/><path d="M6 4.5 A3.8 3.8 0 0 1 8.5 7.5" fill="none" stroke="#4cae4f" stroke-width="1.6"/><path d="M4.7 7.5 L7 4" stroke="#7a7876" stroke-width="0.7"/></g><g transform="translate(649.5,107.6)"><rect x="0.5" y="1.5" width="9" height="6.5" fill="none" stroke="#b3b1af" stroke-width="0.8"/><rect x="2" y="3.5" width="2.5" height="1.5" fill="#b3b1af"/><rect x="5.5" y="3.5" width="2.5" height="1.5" fill="#b3b1af"/></g><g transform="translate(664.6,107.6)"><rect x="1" y="0.5" width="7.5" height="8" fill="none" stroke="#b3b1af" stroke-width="0.8"/><rect x="2.5" y="2" width="1.5" height="5" fill="#7a7876"/><path d="M5 3 H7 M5 5 H7" stroke="#b3b1af" stroke-width="0.7"/></g><g transform="translate(679.7,107.6)"><rect x="0.5" y="1.5" width="9" height="6.5" fill="none" stroke="#b3b1af" stroke-width="0.8"/><path d="M2 6 L4 4 L6 5 L8 3" fill="none" stroke="#4cae4f" stroke-width="0.7"/><circle cx="7" cy="3.5" r="0.7" fill="#e2474b"/></g><g transform="translate(604.2,120.6)"><rect x="0.5" y="0.5" width="8" height="1.8" fill="#72a9dd"/><rect x="0.5" y="2.5" width="8" height="6" fill="none" stroke="#b3b1af" stroke-width="0.7"/><path d="M4.5 4.5 H9.5 L7.5 6.5 V9 L6.5 9 V6.5Z" fill="#7a7876"/><circle cx="2" cy="4.5" r="0.6" fill="#f2a650"/></g><g transform="translate(619.3,120.6)"><rect x="0.5" y="0.5" width="9" height="8" fill="none" stroke="#b3b1af" stroke-width="0.8"/><rect x="0.5" y="0.5" width="9" height="1.8" fill="#72a9dd"/><path d="M0.5 4.5 H9.5 M0.5 6.5 H9.5 M3.5 0.5 V8.5 M6.5 0.5 V8.5" stroke="#b3b1af" stroke-width="0.5"/></g><g transform="translate(634.4,120.6)"><rect x="0.5" y="0.5" width="9" height="8" fill="none" stroke="#b3b1af" stroke-width="0.8"/><rect x="0.5" y="0.5" width="9" height="1.8" fill="#72a9dd"/><rect x="0.5" y="0.5" width="2" height="8" fill="#72a9dd" opacity="0.6"/><path d="M0.5 4.5 H9.5 M0.5 6.5 H9.5 M5.5 0.5 V8.5" stroke="#b3b1af" stroke-width="0.5"/></g><g transform="translate(649.5,120.6)"><text x="1.5" y="9" font-family="Liberation Sans" font-size="11" fill="#72a9dd">R</text></g><g transform="translate(664.6,120.6)"><text x="-1" y="8.5" font-family="Liberation Sans" font-size="9.5" fill="#72a9dd">Py</text></g><g transform="translate(679.7,120.6)"><path d="M0.5 0.5 V8.5 H9" fill="none" stroke="#b3b1af" stroke-width="0.8"/><rect x="2" y="1.5" width="3" height="1.4" fill="#7a7876"/><rect x="2" y="4" width="2" height="1.4" fill="#72a9dd"/><circle cx="7.5" cy="6.5" r="1.3" fill="#f2a650"/><rect x="5.5" y="2" width="2" height="1" fill="#72a9dd"/></g><g transform="translate(604.2,133.6)"><path d="M0.5 0.5 H9 V6 H4 L2 8 V6 H0.5Z" fill="none" stroke="#72a9dd" stroke-width="0.8"/><circle cx="8" cy="7.5" r="1.5" fill="#f4c000"/></g><g transform="translate(619.3,133.6)"><circle cx="4.5" cy="4.5" r="4" fill="#2e8b57"/><circle cx="4.5" cy="4.5" r="2.8" fill="#72a9dd"/><circle cx="3.5" cy="3.5" r="1.2" fill="#3cb371"/></g><g transform="translate(634.4,133.6)"><rect x="-0.5" y="-0.5" width="10" height="10" fill="#742774"/><path d="M2 5 Q4.5 2 7 5 Q4.5 7 2 5Z" fill="none" stroke="#e8d0e8" stroke-width="0.7"/></g><g transform="translate(649.5,133.6)"><circle cx="1.5" cy="5" r="0.7" fill="#7a7876"/><circle cx="4.5" cy="5" r="0.7" fill="#7a7876"/><circle cx="7.5" cy="5" r="0.7" fill="#7a7876"/></g></svg>


<!-- left overlay -->
<div class="a" style="left:25px;top:227px;width:182px;height:151px;background:#fff;border-radius:5px;overflow:hidden;box-shadow:2px 5px 14px 3px rgba(110,90,50,0.34)">
 <div class="a" style="left:0;top:0;width:12px;height:151px;background:#f8f7f6"></div>
 <div class="a" style="left:12px;top:0;width:1px;height:151px;background:#c8c6c4"></div>
 <svg class="a" style="left:0;top:0" width="182" height="151" viewBox="25 227 182 151">
  <g stroke="#f3e8f0" stroke-width="0.8">
   <line x1="81" y1="237" x2="207" y2="237"/><line x1="81" y1="267.3" x2="207" y2="267.3"/>
  </g>
  <rect x="84" y="295.4" width="123" height="34.6" fill="#D9B300"/>
  <rect x="84" y="330" width="123" height="13" fill="#744EC2"/>
  <rect x="84" y="343" width="123" height="6" fill="#E044A7"/>
  <rect x="84" y="349" width="123" height="25" fill="#6B007B"/>
  <rect x="84" y="374" width="123" height="4" fill="#E66C37"/>
  <g stroke="#ffffff" stroke-opacity="0.25" stroke-width="0.8">
   <line x1="84" y1="297.6" x2="207" y2="297.6"/><line x1="84" y1="327.9" x2="207" y2="327.9"/><line x1="84" y1="358.2" x2="207" y2="358.2"/>
  </g>
  <g font-family="Liberation Sans" font-size="12.5" fill="#252423" text-anchor="end" letter-spacing="-0.6">
   <text x="75" y="241.7">$200K</text><text x="75" y="272">$175K</text><text x="75" y="302.3">$150K</text><text x="75" y="332.6">$125K</text><text x="75" y="362.9">$100K</text>
  </g>
  <g stroke="#9bb" stroke-width="0.9">
   <line x1="77.5" y1="237" x2="80.5" y2="237"/><line x1="77.5" y1="267.3" x2="80.5" y2="267.3"/><line x1="77.5" y1="297.6" x2="80.5" y2="297.6"/><line x1="77.5" y1="327.9" x2="80.5" y2="327.9"/><line x1="77.5" y1="358.2" x2="80.5" y2="358.2"/>
  </g>
 </svg>
</div>

<!-- right overlay -->
<div class="a" style="left:541px;top:160px;width:182px;height:232px;background:#f7f6f5;border-radius:5px;overflow:hidden;box-shadow:3px 5px 14px 3px rgba(110,90,50,0.3)">
 <div class="a" style="left:0;top:35px;width:182px;height:1px;background:#e1dfdd"></div>
 <svg class="a" style="left:7px;top:14px" width="14" height="9" viewBox="0 0 14 9"><path d="M1.5 7.5 L7 2 L12.5 7.5" fill="none" stroke="#444" stroke-width="1.1"/></svg>
 <div class="t" style="left:27px;top:13px;font-size:12px;color:#252423">Primary Y...</div>
 <div class="t" style="left:103px;top:13px;font-size:12px;color:#252423">On</div>
 <div class="a" style="left:123px;top:18px;width:24px;height:2px;background:#555"></div>
 <div class="a" style="left:141px;top:13px;width:12px;height:12px;border-radius:50%;background:#5a5a5a"></div>
 <div class="t" style="left:18px;top:49px;font-size:12px;color:#252423">Font Style</div>
 <div class="a" style="left:18px;top:67px;width:145px;height:23px;background:#fdfdfd;border:1px solid #d6d4d2"></div>
 <div class="t" style="left:23px;top:72px;font-size:12px;color:#252423">Regular</div>
 <svg class="a" style="left:144px;top:75px" width="10" height="7" viewBox="0 0 10 7"><path d="M1 1.5 L5 5 L9 1.5" fill="none" stroke="#777" stroke-width="0.9"/></svg>
 <div class="t" style="left:18px;top:111px;font-size:12px;color:#252423">Font Size</div>
 <div class="a" style="left:18px;top:128px;width:62px;height:23px;background:#fdfdfd;border:1px solid #d6d4d2"></div>
 <div class="t" style="left:27.5px;top:134px;font-size:12px;color:#252423">12</div><div class="t" style="left:49.5px;top:134px;font-size:12px;color:#252423">pt</div>
 <svg class="a" style="left:67px;top:129px" width="12" height="21" viewBox="0 0 12 21"><path d="M2 7 L6 3 L10 7 M2 14 L6 18 L10 14" fill="none" stroke="#555" stroke-width="0.9"/></svg>
 <div class="t" style="left:18px;top:176px;font-size:12px;color:#252423">Title Text</div>
 <div class="a" style="left:18px;top:193px;width:145px;height:24px;background:#fdfdfd;border:1px solid #d6d4d2"></div>
 <div class="a" style="left:175px;top:51px;width:7px;height:93px;background:#d8d6d4"></div>
 <div class="a" style="left:163px;top:170px;width:6px;height:62px;background:#d8d6d4"></div>
</div>

</body></html>
